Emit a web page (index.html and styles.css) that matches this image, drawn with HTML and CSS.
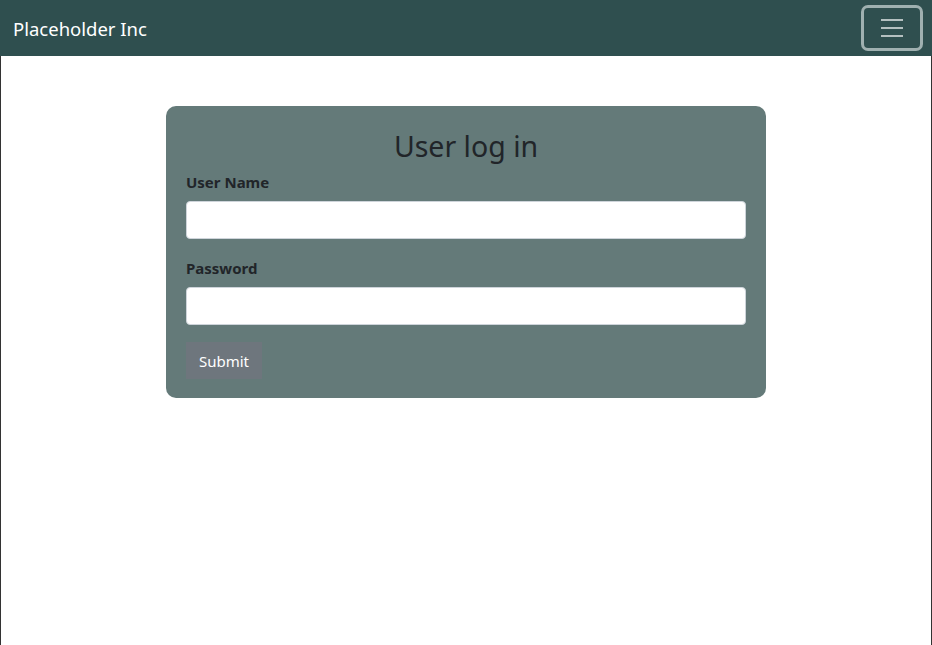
FILE: index.html
```html
<!DOCTYPE html>
<html lang="en">
<head>
<meta charset="utf-8">
<title>User log in</title>
<link rel="stylesheet" href="styles.css">
</head>
<body>
<div class="frame">
  <nav class="navbar">
    <span class="brand">Placeholder Inc</span>
    <button class="toggler" type="button" aria-label="Toggle navigation">
      <svg width="30" height="30" viewBox="0 0 30 30"><path d="M4 7h22M4 15h22M4 23h22" stroke="#b4c0c0" stroke-width="2" stroke-linecap="butt"/></svg>
    </button>
  </nav>
  <main class="main">
    <form class="card">
      <h2 class="title">User log in</h2>
      <div class="field">
        <label class="label" for="u">User Name</label>
        <input class="input" id="u" type="text">
      </div>
      <div class="field">
        <label class="label" for="p">Password</label>
        <input class="input" id="p" type="password">
      </div>
      <button class="submit" type="button">Submit</button>
    </form>
  </main>
</div>
</body>
</html>
```
FILE: styles.css
```css
html, body { margin: 0; padding: 0; height: 100%; }
body {
  font-family: "Noto Sans", "Open Sans", sans-serif;
  color: #212529;
  background: #fff;
}
.frame {
  box-sizing: border-box;
  min-height: 645px;
  border-left: 1px solid #333;
  border-right: 1px solid #333;
}
.navbar {
  height: 56px;
  background: #2f4f4f;
  display: flex;
  align-items: center;
  justify-content: space-between;
  padding: 0 9px 0 13px;
  margin: 0 -1px;
}
.brand {
  color: #fff;
  font-size: 18.5px;
  line-height: 1;
  padding-top: 2px;
}
.toggler {
  box-sizing: border-box;
  width: 62px;
  height: 46px;
  border: 3px solid #9fb0b0;
  border-radius: 7px;
  background: transparent;
  display: flex;
  align-items: center;
  justify-content: center;
  padding: 0;
}
.toggler svg { display: block; }
.main {
  display: flex;
  justify-content: center;
  padding-top: 50px;
}
.card {
  box-sizing: border-box;
  width: 600px;
  background: #647a79;
  border-radius: 10px;
  padding: 23px 20px 19px;
}
.title {
  margin: 0 0 6px;
  text-align: center;
  font-size: 28.5px;
  font-weight: 400;
  line-height: 35px;
}
.field { margin-bottom: 17px; }
.label {
  display: block;
  font-weight: 700;
  font-size: 15px;
  line-height: 24px;
  margin-bottom: 7px;
}
.input {
  box-sizing: border-box;
  display: block;
  width: 100%;
  height: 38px;
  border: 1px solid #ced4da;
  border-radius: 4px;
  background: #fff;
  font-size: 16px;
  padding: 6px 12px;
  margin: 0;
}
.submit {
  box-sizing: border-box;
  display: block;
  height: 37px;
  width: 76px;
  padding: 0;
  border: none;
  border-radius: 0;
  background: #6e767d;
  color: #fff;
  font-family: inherit;
  font-size: 15px;
}
```
